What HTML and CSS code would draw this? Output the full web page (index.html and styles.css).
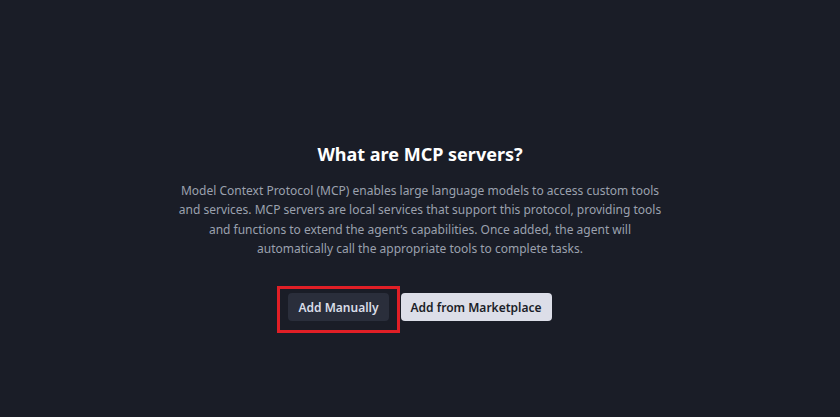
FILE: index.html
```html
<!DOCTYPE html>
<html lang="en">
<head>
    <meta charset="UTF-8">
    <meta name="viewport" content="width=device-width, initial-scale=1.0">
    <title>MCP Servers</title>
    <link rel="stylesheet" href="styles.css">
</head>
<body>
    <div class="intro">
        <h2>What are MCP servers?</h2>
        <p>Model Context Protocol (MCP) enables large language models to access custom tools and services. MCP servers are local services that support this protocol, providing tools and functions to extend the agent’s capabilities. Once added, the agent will automatically call the appropriate tools to complete tasks.</p>
        <div class="actions">
            <div class="highlight">
                <button class="button dark">Add Manually</button>
            </div>
            <button class="button light">Add from Marketplace</button>
        </div>
    </div>
</body>
</html>
```

FILE: styles.css
```css
body {
    margin: 0;
    font-family: "Noto Sans", "Open Sans", sans-serif;
    background: #1a1d27;
    height: 417px;
}
.intro {
    display: flex;
    flex-direction: column;
    align-items: center;
    padding-top: 140px;
}
.intro h2 {
    margin: 0;
    font-size: 18px;
    line-height: 28px;
    font-weight: 700;
    color: #ffffff;
}
.intro p {
    margin: 13px 0 0;
    width: 490px;
    font-size: 12px;
    line-height: 19.3px;
    color: #9ba1ae;
    text-align: center;
}
.actions {
    display: flex;
    align-items: center;
    gap: 12px;
    margin-top: 35px;
}
.highlight {
    position: relative;
}
.highlight::after {
    content: "";
    position: absolute;
    left: -11px;
    right: -11px;
    top: -7px;
    bottom: -12px;
    border: 3px solid #e01f26;
}
.button {
    font-family: inherit;
    font-size: 12px;
    font-weight: 600;
    height: 28px;
    padding: 0 10px;
    border: none;
    border-radius: 4px;
}
.dark {
    background: #2a2e3b;
    color: #d9dde8;
}
.light {
    background: #dcdee8;
    color: #1a1d27;
}
```
